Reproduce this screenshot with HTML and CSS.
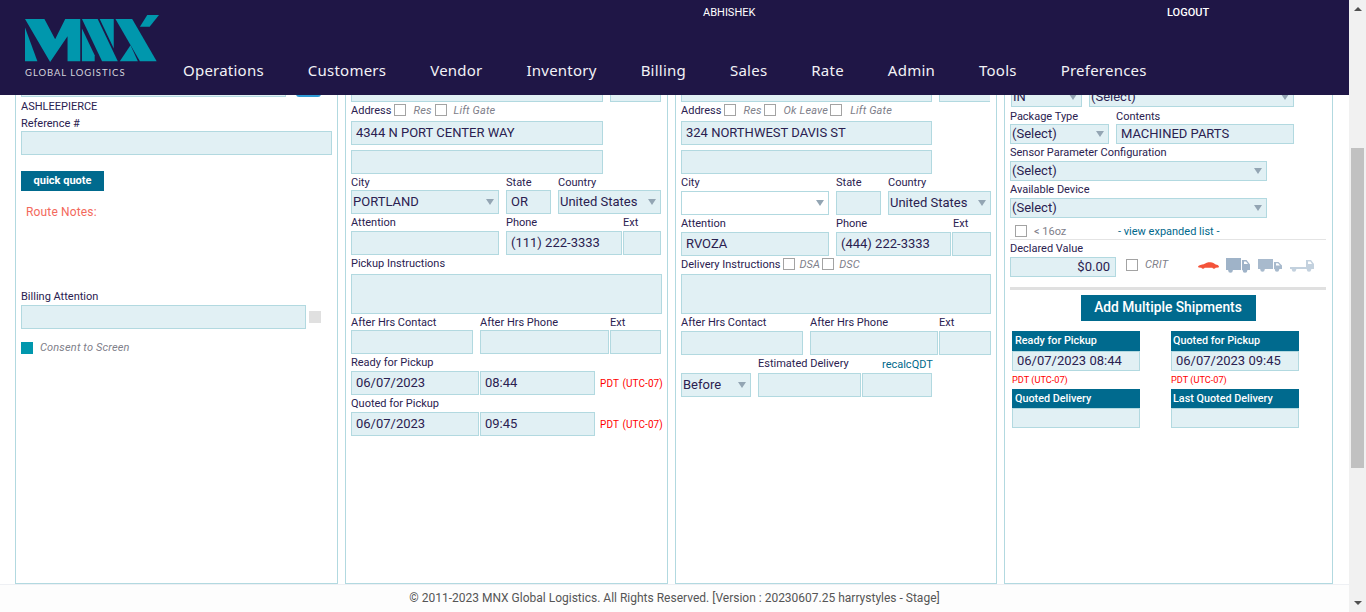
FILE: index.html
```html
<!DOCTYPE html>
<html lang="en">
<head>
  <meta charset="UTF-8" />
  <title>MNX Global Logistics</title>
  <link rel="stylesheet" href="styles.css">
</head>
<body>
<div class="page">
  <div class="content">
    <header class="top">
      <div class="brand">
        <svg class="logo" viewBox="75 45 400 140" width="134" height="47">
          <polygon points="75,82 112,183 75,183"/>
          <polygon points="75,57 133,57 165,117 195,57 240,57 240,183 202,183 202,108 150,185"/>
          <polygon points="245,85 283,165 283,183 245,183"/>
          <polygon points="245,57 292,57 352,183 305,183"/>
          <polygon points="298,57 340,57 340,145"/>
          <polygon points="345,57 395,57 468,183 418,183"/>
          <polygon points="358,183 390,135 412,183"/>
          <polygon points="440,45 475,45 447,80 418,80"/>
        </svg>
        <div class="brand-sub">GLOBAL LOGISTICS</div>
      </div>
      <div class="top-right">
        <div class="userbar">
          <span class="username">ABHISHEK</span>
          <span class="logout">LOGOUT</span>
        </div>
        <nav class="nav">
          <a>Operations</a><a>Customers</a><a>Vendor</a><a>Inventory</a><a>Billing</a><a>Sales</a><a>Rate</a><a>Admin</a><a>Tools</a><a>Preferences</a>
        </nav>
      </div>
    </header>

    <main class="panels">
      <!-- caller -->
      <section class="panel">
        <div class="row clip-1">
          <div class="fld w-265"></div>
          <div class="lookup"></div>
        </div>
        <div class="lbl h-18">ASHLEEPIERCE</div>
        <div class="lbl h-16">Reference #</div>
        <div class="fld w-311"></div>
        <button class="quick">quick quote</button>
        <div class="route">Route Notes:</div>
        <div class="lbl billing">Billing Attention</div>
        <div class="row mid">
          <div class="fld w-285"></div>
          <div class="grey-box"></div>
        </div>
        <div class="row mid consent">
          <div class="teal-box"></div>
          <span class="opt">Consent to Screen</span>
        </div>
      </section>

      <!-- pickup -->
      <section class="panel">
        <div class="row clip-7 g-7">
          <div class="fld w-252"></div>
          <div class="fld w-51"></div>
        </div>
        <div class="lbl row mid addr">
          <span>Address</span><i class="chk"></i><span class="opt">Res</span><i class="chk"></i><span class="opt">Lift Gate</span>
        </div>
        <div class="fld w-252 pad">4344 N PORT CENTER WAY</div>
        <div class="fld w-252 mt-5"></div>
        <div class="lbl row h-16 g-7"><span class="w-148">City</span><span class="w-45">State</span><span>Country</span></div>
        <div class="row g-7">
          <div class="fld sel w-148">PORTLAND</div>
          <div class="fld w-45 pad">OR</div>
          <div class="fld sel w-103">United States</div>
        </div>
        <div class="lbl row h-17 g-7"><span class="w-148">Attention</span><span class="w-116">Phone</span><span class="ext">Ext</span></div>
        <div class="row">
          <div class="fld w-148"></div>
          <div class="fld w-116 pad ml-7">(111) 222-3333</div>
          <div class="fld w-38 ml-1"></div>
        </div>
        <div class="lbl h-19 up">Pickup Instructions</div>
        <div class="fld area w-311"></div>
        <div class="lbl row h-16"><span class="w-129">After Hrs Contact</span><span class="w-130">After Hrs Phone</span><span>Ext</span></div>
        <div class="row">
          <div class="fld w-122"></div>
          <div class="fld w-129 ml-7"></div>
          <div class="fld w-51 ml-1"></div>
        </div>
        <div class="lbl h-17">Ready for Pickup</div>
        <div class="row mid">
          <div class="fld w-128 pad">06/07/2023</div>
          <div class="fld w-115 pad ml-1">08:44</div>
          <span class="tz wide">PDT (UTC-07)</span>
        </div>
        <div class="lbl h-17">Quoted for Pickup</div>
        <div class="row mid">
          <div class="fld w-128 pad">06/07/2023</div>
          <div class="fld w-115 pad ml-1">09:45</div>
          <span class="tz wide">PDT (UTC-07)</span>
        </div>
      </section>

      <!-- delivery -->
      <section class="panel">
        <div class="row clip-7 g-7">
          <div class="fld w-251"></div>
          <div class="fld w-52"></div>
        </div>
        <div class="lbl row mid addr">
          <span>Address</span><i class="chk"></i><span class="opt">Res</span><i class="chk tight"></i><span class="opt">Ok Leave</span><i class="chk tight"></i><span class="opt">Lift Gate</span>
        </div>
        <div class="fld w-251 pad">324 NORTHWEST DAVIS ST</div>
        <div class="fld w-251 mt-5"></div>
        <div class="lbl row h-17 g-7"><span class="w-148">City</span><span class="w-45">State</span><span>Country</span></div>
        <div class="row g-7">
          <div class="fld sel blank w-148"></div>
          <div class="fld w-45"></div>
          <div class="fld sel w-103">United States</div>
        </div>
        <div class="lbl row h-17 g-7"><span class="w-148">Attention</span><span class="w-116">Phone</span><span class="ext">Ext</span></div>
        <div class="row">
          <div class="fld w-148 pad">RVOZA</div>
          <div class="fld w-115 pad ml-7">(444) 222-3333</div>
          <div class="fld w-39 ml-1"></div>
        </div>
        <div class="lbl row mid h-18 instr">
          <span>Delivery Instructions</span><i class="chk dsa"></i><span class="opt">DSA</span><i class="chk dsc"></i><span class="opt">DSC</span>
        </div>
        <div class="fld area w-310"></div>
        <div class="lbl row h-17"><span class="w-129">After Hrs Contact</span><span class="w-129">After Hrs Phone</span><span>Ext</span></div>
        <div class="row">
          <div class="fld w-122"></div>
          <div class="fld w-128 ml-7"></div>
          <div class="fld w-52 ml-1"></div>
        </div>
        <div class="lbl row h-18">
          <span class="est">Estimated Delivery</span><span class="recalc">recalcQDT</span>
        </div>
        <div class="row">
          <div class="fld sel w-70">Before</div>
          <div class="fld w-103 ml-7"></div>
          <div class="fld w-70 ml-1"></div>
        </div>
      </section>

      <!-- shipment -->
      <section class="panel ship">
        <div class="row clip-12 g-7">
          <div class="fld sel small w-71 ml-1">IN</div>
          <div class="fld sel small w-205">(Select)</div>
        </div>
        <div class="lbl row h-17 g-7 pkg"><span class="w-99">Package Type</span><span>Contents</span></div>
        <div class="row g-7">
          <div class="fld sel small w-99">(Select)</div>
          <div class="fld small w-178 pad">MACHINED PARTS</div>
        </div>
        <div class="lbl h-17">Sensor Parameter Configuration</div>
        <div class="fld sel small w-257">(Select)</div>
        <div class="lbl h-17">Available Device</div>
        <div class="fld sel small w-257">(Select)</div>
        <div class="row mid small-row">
          <i class="chk first"></i>
          <span class="oz">&lt; 16oz</span>
          <span class="expand">- view expanded list -</span>
        </div>
        <div class="hr-thin"></div>
        <div class="lbl h-17">Declared Value</div>
        <div class="row declared">
          <div class="fld small w-106 money">$0.00</div>
          <i class="chk crit-chk"></i>
          <span class="opt crit">CRIT</span>
          <div class="vehicles">
            <svg class="car" width="21" height="9" viewBox="0 0 22 9"><path fill="#f4533a" d="M0 5.5 C1 3.8 4 3.6 6 3.2 C8 1.6 10 1 13 1 C15.5 1 17 2.2 18.5 3.4 C20 3.6 21.6 4.2 22 5.4 L21.5 6.6 L18.5 6.8 A2 2 0 0 1 15 6.8 L7 6.8 A2 2 0 0 1 3.5 6.8 L0.6 6.6 Z"/></svg>
            <svg width="24" height="15" viewBox="0 0 24 15"><path fill="#9fb3c8" d="M0 0H15V12H0Z M16 2H20.5L24 6.5V12H16Z"/><circle cx="4.5" cy="12.5" r="2.3" fill="#9fb3c8"/><circle cx="19" cy="12.5" r="2.3" fill="#9fb3c8"/><path fill="#fff" d="M18 3.5H20L22 6H18Z"/></svg>
            <svg width="24" height="13" viewBox="0 0 24 13"><path fill="#a8bacd" d="M0 0H15V10H0Z M16 3H20.5L24 6.5V10H16Z"/><circle cx="4.5" cy="10.5" r="2.2" fill="#a8bacd"/><circle cx="19" cy="10.5" r="2.2" fill="#a8bacd"/><path fill="#fff" d="M18 4.2H20L22 6.5H18Z"/></svg>
            <svg width="24" height="13" viewBox="0 0 24 13"><path fill="#c3d1de" d="M0 8H16V10H0Z M16 1H21L24 5V10H16Z"/><circle cx="4" cy="10.5" r="2.2" fill="#c3d1de"/><circle cx="19" cy="10.5" r="2.2" fill="#c3d1de"/><path fill="#fff" d="M18 2.4H20.4L22 5H18Z"/></svg>
          </div>
        </div>
        <div class="hr-thick"></div>
        <button class="multi">Add Multiple Shipments</button>
        <div class="times">
          <div>
            <div class="t-head">Ready for Pickup</div>
            <div class="t-val">06/07/2023 08:44</div>
            <div class="tz t-zone">PDT (UTC-07)</div>
            <div class="t-head short">Quoted Delivery</div>
            <div class="t-val"></div>
          </div>
          <div class="t-right">
            <div class="t-head">Quoted for Pickup</div>
            <div class="t-val">06/07/2023 09:45</div>
            <div class="tz t-zone">PDT (UTC-07)</div>
            <div class="t-head short">Last Quoted Delivery</div>
            <div class="t-val"></div>
          </div>
        </div>
      </section>
    </main>

    <footer class="foot">© 2011-2023 MNX Global Logistics. All Rights Reserved. [Version : 20230607.25 harrystyles - Stage]</footer>
  </div>

  <div class="scrollbar">
    <i class="arrow-up"></i>
    <div class="thumb"></div>
    <i class="arrow-down"></i>
  </div>
</div>
</body>
</html>
```

FILE: styles.css
```css
* {
  box-sizing: border-box;
}

body {
  margin: 0;
  height: 612px;
  overflow: hidden;
  background-color: #fff;
  color: #2a2150;
  font-family: Roboto, Arial, sans-serif;
  font-size: 11px;
}

.page {
  display: flex;
  height: 612px;
}

.content {
  flex: 1;
  display: flex;
  flex-direction: column;
  min-width: 0;
}

/* header */
.top {
  display: flex;
  height: 95px;
  flex-shrink: 0;
  background-color: #1f1646;
  color: #fff;
}

.brand {
  width: 183px;
  padding: 15px 0 0 25px;
}

.logo {
  display: block;
  fill: #0097ad;
}

.brand-sub {
  margin-top: 5px;
  font-family: Lato, sans-serif;
  font-size: 9.5px;
  letter-spacing: 0.95px;
  color: #d4d4dc;
  white-space: nowrap;
}

.top-right {
  flex: 1;
}

.userbar {
  display: flex;
  height: 61px;
  padding-top: 7px;
  font-size: 11px;
  line-height: 12px;
}

.username {
  width: 464px;
  margin-left: 520px;
}

.logout {
  font-weight: 500;
}

.nav {
  display: flex;
  gap: 44px;
  font-family: "Noto Sans", sans-serif;
  font-size: 15px;
  line-height: 18px;
  letter-spacing: 0.23px;
  color: #f2f2f6;
}

/* panels */
.panels {
  flex: 1;
  display: grid;
  grid-template-columns: 323px 323px 322px 329px;
  gap: 7px;
  padding-left: 15px;
  min-height: 0;
}

.panel {
  padding: 0 6px 0 5px;
  border: 1px solid #b2d9e0;
  border-top: none;
  overflow: hidden;
}

.row {
  display: flex;
}

.mid {
  align-items: center;
}

.lbl {
  white-space: nowrap;
  line-height: 13px;
  align-items: center;
}

.lbl:not(.row) {
  display: flex;
}

.up {
  padding-bottom: 3px;
}

.fld {
  height: 24px;
  flex-shrink: 0;
  border: 1px solid #b2d9e0;
  background-color: #e1f0f4;
  font-size: 13px;
  line-height: 22px;
  white-space: nowrap;
  overflow: hidden;
}

.fld.small {
  height: 20px;
  line-height: 18px;
}

.pad {
  padding-left: 4px;
}

.sel {
  display: flex;
  align-items: center;
  padding: 0 4px 0 1px;
}

.sel::after {
  content: "";
  margin-left: auto;
  border-left: 4px solid transparent;
  border-right: 4px solid transparent;
  border-top: 6px solid #93a5b3;
}

.blank {
  background-color: #fff;
}

.area {
  height: 40px;
}

/* rows cut off by the scrolled header */
.clip-1 {
  height: 2px;
  overflow: hidden;
  align-items: flex-end;
}

.clip-7 {
  height: 7px;
  align-items: flex-end;
  overflow: hidden;
}

.clip-12 {
  height: 12px;
  align-items: flex-end;
  overflow: hidden;
}

.clip-12 .fld {
  height: 20px;
}

.lookup {
  width: 25px;
  height: 20px;
  margin-left: 10px;
  flex-shrink: 0;
  border-radius: 3px;
  background-color: #2f9bd6;
}

.addr {
  height: 19px;
  padding-bottom: 3px;
}

.instr {
  padding-bottom: 2px;
}

.pkg {
  padding-top: 1px;
}

.chk {
  display: block;
  width: 12px;
  height: 12px;
  flex-shrink: 0;
  margin: 0 7px 0 3px;
  border: 1px solid #a3a3a3;
  background-color: #fff;
}

.chk.tight {
  margin: 0 8px 0 2px;
}

.chk.dsa {
  margin: 0 4px 0 3px;
}

.chk.dsc {
  margin: 0 5px 0 2px;
}

.opt {
  font-style: italic;
  letter-spacing: 0.15px;
  color: #80808a;
}

.tz {
  color: #f00;
  font-size: 10px;
  white-space: nowrap;
}

.wide {
  margin-left: 5px;
  word-spacing: 1px;
  letter-spacing: 0.1px;
}

.recalc {
  color: #00688b;
  margin-left: 21px;
}

.est {
  width: 103px;
  margin-left: 77px;
  padding-bottom: 2px;
}

.ext {
  margin-left: -6px;
}

.h-16 { height: 16px; }
.h-17 { height: 17px; }
.h-18 { height: 18px; }
.h-19 { height: 19px; }

/* left column */
.quick {
  display: block;
  width: 83px;
  height: 20px;
  margin-top: 16px;
  padding: 0 0 2px;
  border: none;
  background-color: #006a8e;
  color: #fff;
  font-family: Roboto, Arial, sans-serif;
  font-size: 11px;
  font-weight: 700;
}

.route {
  margin: 14px 0 0 5px;
  line-height: 14px;
  color: #f3695c;
  font-size: 12px;
  letter-spacing: 0.15px;
}

.billing {
  height: 16px;
  margin-top: 70px;
  padding-bottom: 2px;
}

.grey-box {
  width: 12px;
  height: 12px;
  margin-left: 3px;
  background-color: #e0e0e0;
}

.consent {
  margin-top: 12px;
}

.teal-box {
  width: 12px;
  height: 12px;
  margin-right: 7px;
  background-color: #0097ad;
}

/* shipment column */
.small-row {
  height: 21px;
  padding-top: 5px;
}

.chk.first {
  margin: 0 7px 0 5px;
}

.oz {
  width: 84px;
  color: #80808a;
}

.expand {
  color: #00688b;
}

.hr-thin {
  height: 1px;
  background-color: #e4e4e4;
}

.declared {
  height: 20px;
}

.money {
  padding-right: 5px;
  text-align: right;
}

.chk.crit-chk {
  margin: 2px 7px 0 10px;
}

.crit {
  line-height: 16px;
}

.vehicles {
  display: flex;
  align-items: center;
  gap: 8px;
  height: 15px;
  margin: 1px 0 0 30px;
}

.car {
  margin-right: -1px;
}

.hr-thick {
  height: 3px;
  margin-top: 10px;
  background-color: #e0e0e0;
}

.multi {
  display: block;
  width: 175px;
  height: 26px;
  margin: 5px auto 0;
  padding: 0 0 3px;
  border: none;
  background-color: #006a8e;
  color: #fff;
  font-family: Roboto, Arial, sans-serif;
  font-size: 13.8px;
  font-weight: 500;
}

.times {
  display: grid;
  grid-template-columns: 128px 128px;
  column-gap: 31px;
  margin: 10px 0 0 2px;
}

.t-head {
  height: 20px;
  padding-left: 3px;
  background-color: #006a8e;
  color: #fff;
  font-size: 10.8px;
  font-weight: 500;
  line-height: 20px;
}

.t-head.short {
  height: 19px;
  line-height: 19px;
}

.t-right .t-head {
  padding-left: 2px;
}

.t-val {
  height: 20px;
  padding-left: 4px;
  border: 1px solid #b2d9e0;
  background-color: #e1f0f4;
  font-size: 13px;
  line-height: 18px;
  white-space: nowrap;
}

.t-zone {
  height: 18px;
  font-size: 9.2px;
  line-height: 18px;
}

/* widths */
.w-38 { width: 38px; }
.w-39 { width: 39px; }
.w-45 { width: 45px; }
.w-51 { width: 51px; }
.w-52 { width: 52px; }
.w-70 { width: 70px; }
.w-71 { width: 71px; }
.w-99 { width: 99px; }
.w-103 { width: 103px; }
.w-106 { width: 106px; }
.w-115 { width: 115px; }
.w-116 { width: 116px; }
.w-122 { width: 122px; }
.w-128 { width: 128px; }
.w-129 { width: 129px; }
.w-130 { width: 130px; }
.w-148 { width: 148px; }
.w-178 { width: 178px; }
.w-205 { width: 205px; }
.w-251 { width: 251px; }
.w-252 { width: 252px; }
.w-257 { width: 257px; }
.w-265 { width: 265px; }
.w-285 { width: 285px; }
.w-310 { width: 310px; }
.w-311 { width: 311px; }

.g-7 { gap: 7px; }
.ml-1 { margin-left: 1px; }
.ml-7 { margin-left: 7px; }
.mt-5 { margin-top: 5px; }

/* footer */
.foot {
  height: 28px;
  flex-shrink: 0;
  border-top: 1px solid #eef0f4;
  background-color: #fdfdfd;
  text-align: center;
  font-size: 12px;
  line-height: 27px;
  color: #555;
}

/* scrollbar */
.scrollbar {
  width: 17px;
  flex-shrink: 0;
  display: flex;
  flex-direction: column;
  align-items: center;
  background-color: #f1f1f1;
}

.arrow-up {
  margin-top: 7px;
  border-left: 4px solid transparent;
  border-right: 4px solid transparent;
  border-bottom: 4px solid #505050;
}

.thumb {
  width: 13px;
  height: 320px;
  margin-top: 137px;
  background-color: #c1c1c1;
}

.arrow-down {
  margin-top: auto;
  margin-bottom: 7px;
  border-left: 4px solid transparent;
  border-right: 4px solid transparent;
  border-top: 4px solid #505050;
}
```
